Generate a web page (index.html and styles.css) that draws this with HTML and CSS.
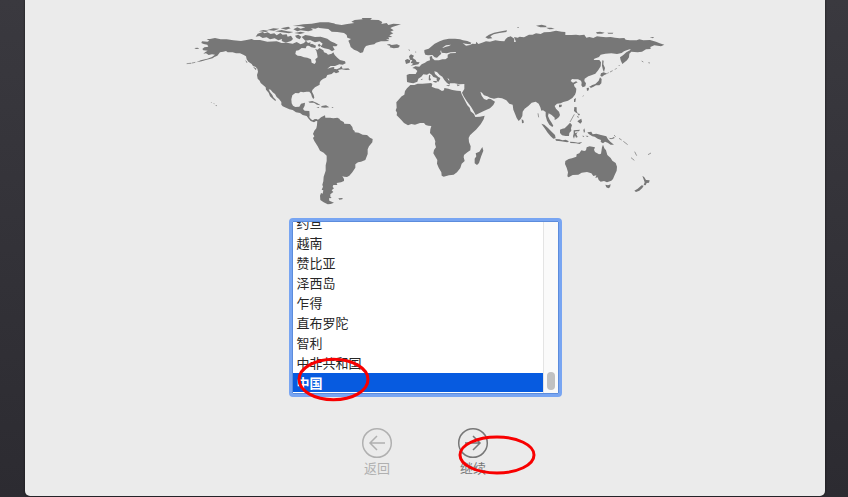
FILE: index.html
```html
<!DOCTYPE html>
<html lang="zh-CN">
<head>
<meta charset="utf-8">
<title>欢迎</title>
<link rel="stylesheet" href="styles.css">
</head>
<body>
<main class="panel">
  <svg class="map" viewBox="0 0 1470 600" aria-hidden="true">
    <!-- North and Central America -->
    <path d="M66 94L82 95 88 92 80 87 90 87 105 84 122 88 140 88 160 91 183 93 200 90 215 87 222 90 240 90 262 95 290 94 305 99 320 98 338 101 350 96 362 103 372 99 378 92 384 99 392 97 390 106 380 108 377 115 365 114 356 121 348 122 346 132 353 137 362 138 372 142 382 143 393 148 395 158 404 162 408 156 406 148 413 142 411 130 409 122 405 117 413 119 418 114 430 121 432 127 440 130 444 134 455 131 460 127 464 135 472 143 480 150 495 154 497 160 488 164 478 163 465 168 452 168 442 176 456 172 463 171 462 176 470 178 479 174 484 168 488 176 505 175 510 179 498 180 485 178 474 180 478 186 468 190 462 186 455 192 442 195 438 203 430 206 422 212 419 218 419 224 405 232 397 240 396 245 401 255 403 263 400 267 396 261 393 251 388 245 380 245 370 247 362 245 356 250 346 249 337 256 334 268 335 280 339 287 346 291 358 290 363 281 375 278 374 287 369 297 374 302 388 303 389 316 388 322 393 328 398 331 405 327 411 328 416 334 408 333 402 337 392 333 386 326 380 318 368 315 360 309 348 307 338 300 328 298 318 293 308 289 304 284 304 276 297 267 290 261 285 252 278 247 272 239 266 238 270 246 277 255 280 262 288 270 286 273 278 266 270 259 266 248 258 239 257 232 250 226 242 219 239 212 233 206 231 195 234 185 232 176 226 170 219 168 215 162 205 155 200 148 198 139 190 134 180 130 168 130 158 127 143 127 138 123 130 125 120 127 112 137 103 141 98 145 80 149 65 154 49 157 62 151 82 146 96 141 105 134 96 133 86 135 78 130 70 131 76 126 83 122 70 121 67 117 73 112 85 110 82 104 71 102 64 99Z"/>
    <!-- Arctic islands -->
    <path d="M227 80L233 71 248 66 254 70 263 67 272 72 283 70 290 76 301 69 308 74 320 73 323 80 333 77 339 87 333 93 317 98 305 93 306 87 295 91 284 85 270 88 260 82 248 84 238 78ZM236 64L250 60 266 62 258 66ZM262 60L280 55 298 56 282 62ZM285 64L305 60 322 64 340 66 327 70 305 67ZM302 55L325 50 332 55 318 59ZM343 69L362 65 375 68 360 72ZM340 58L352 52 362 56 376 52 362 49 338 48 370 43 395 41 420 37 446 37 466 41 450 45 439 49 418 52 406 56 393 55 399 60 385 64 362 61 352 64ZM345 77L355 74 364 80 359 88 350 84ZM365 81L376 75 390 77 405 81 422 80 442 86 452 94 464 99 473 104 469 109 458 109 464 119 456 124 447 118 433 115 422 110 428 101 419 94 405 97 390 90 376 92ZM383 105L396 101 408 107 406 114 394 112ZM413 105L418 101 423 107 417 110ZM43 114L53 113 58 116 48 117ZM22 160L34 158 34 161ZM195 150L202 156 201 160ZM219 170L230 176 227 180ZM92 277L94 276 96 279ZM99 280L104 281 103 283ZM106 285L111 286 109 289ZM385 275L397 273 411 279 422 286 411 284 402 278 389 278ZM425 288L438 286 448 292 434 293 423 292ZM409 291L418 291 416 294ZM454 291L460 291 459 294Z"/>
    <path class="chain" d="M20 161L30 160M36 159L46 157"/>
    <!-- Greenland, Iceland and British Isles -->
    <g transform="translate(480 0)">
      <path d="M-70 47L-48 44 -20 41 5 45 22 42 43 39 34 35 44 30 68 28 65 24 96 24 91 29 116 30 127 36 124 42 140 39 145 45 160 41 183 43 159 50 151 54 161 61 151 65 160 70 148 76 157 81 145 82 148 88 138 88 148 93 134 94 123 94 108 98 103 103 89 105 78 108 73 115 69 127 61 129 52 123 42 119 32 111 29 101 25 92 33 87 22 83 20 75 12 69 -8 66 -25 65 -35 57 -62 54ZM140 104L148 102 155 105 171 103 180 107 175 113 161 115 149 112 151 108ZM207 139L213 133 222 137 218 144 227 150 230 156 239 157 235 163 224 165 212 167 220 161 212 158 217 151 210 149ZM195 151L202 147 211 151 209 158 198 162ZM205 118L210 120 208 123ZM226 124L229 126 227 129Z"/>
      <!-- Mediterranean islands -->
      <path d="M267 196L271 195 270 204 273 208 270 212 266 209ZM279 213L291 213 289 218 281 216ZM318 225L331 226 325 229ZM350 223L360 225 353 229ZM242 208L248 206 246 210Z"/>
      <!-- Novaya Zemlya -->
      <path d="M436 82L447 74 462 68 484 64 501 61 499 66 478 69 461 73 451 79 457 85 444 86Z"/>
    </g>
    <!-- Eurasia -->
    <path d="M680 195L688 192 707 192 712 183 705 176 697 174 706 169 718 170 725 163 735 158 741 154 750 151 749 140 756 138 757 145 764 151 777 151 787 148 796 148 803 143 803 134 811 130 827 129 828 126 812 127 800 130 785 128 783 121 786 115 798 110 807 108 813 104 798 106 789 112 783 120 781 125 784 131 777 137 771 143 764 142 757 135 744 136 736 134 733 127 733 120 746 116 755 109 764 101 779 94 791 89 807 86 825 86 840 88 849 91 862 93 874 98 871 103 856 101 848 99 858 107 870 105 877 101 887 102 889 95 895 102 906 98 918 94 930 95 946 91 960 93 973 94 977 87 983 82 992 79 1003 86 1002 96 1008 95 1002 81 1013 83 1019 80 1032 82 1047 74 1058 74 1068 70 1082 72 1092 67 1110 66 1128 62 1145 65 1156 66 1156 75 1175 75 1188 74 1199 76 1213 74 1219 83 1228 81 1240 84 1251 79 1262 80 1278 82 1292 81 1305 83 1319 85 1333 84 1337 89 1350 91 1370 91 1378 88 1390 91 1410 90 1428 95 1439 100 1453 104 1443 109 1433 107 1423 106 1411 111 1412 117 1398 118 1386 125 1373 127 1354 125 1348 131 1347 142 1341 151 1327 162 1322 151 1320 142 1329 136 1339 127 1350 121 1352 117 1342 120 1332 124 1325 129 1311 132 1294 130 1276 131 1262 134 1257 141 1243 146 1241 150 1258 150 1263 157 1262 169 1255 180 1246 191 1234 196 1225 199 1214 206 1213 213 1218 220 1216 229 1208 232 1204 226 1205 218 1203 212 1194 208 1183 208 1176 207 1172 213 1179 218 1188 214 1193 217 1182 223 1183 229 1189 236 1188 246 1185 254 1177 264 1164 272 1150 276 1142 280 1131 281 1124 288 1128 296 1137 305 1140 315 1137 321 1130 327 1124 330 1124 323 1115 315 1106 310 1104 318 1109 329 1115 338 1120 347 1117 351 1108 344 1101 332 1097 318 1097 306 1089 301 1084 302 1081 292 1076 281 1067 275 1055 278 1045 288 1034 296 1028 305 1027 318 1022 327 1016 333 1010 324 1005 311 1000 299 998 284 988 281 979 271 966 265 954 263 942 266 930 263 922 259 912 256 906 248 901 245 905 257 912 267 920 270 926 266 932 267 945 275 940 285 930 295 913 302 899 309 887 315 881 304 873 290 860 273 851 259 846 248 853 237 853 222 838 223 824 220 809 219 807 207 802 205 810 217 809 224 801 219 793 210 787 200 779 195 771 186 763 184 765 192 775 201 781 204 779 209 774 217 770 211 770 204 760 201 755 194 748 190 741 194 730 193 724 200 715 206 712 215 700 220 690 218 681 216Z"/>
    <g transform="translate(960 0)">
      <!-- Siberian islands -->
      <path d="M108 47L125 44 140 48 137 52 121 52ZM138 53L154 53 164 57 148 58ZM288 67L300 65 314 68 306 71 291 71ZM322 68L340 68 338 71 325 71ZM449 82L462 81 459 85ZM50 52L57 51 55 54Z"/>
      <!-- Sakhalin, Japan and Taiwan -->
      <path d="M307 151L311 152 310 163 315 174 312 186 309 180 306 167ZM303 190L311 187 322 191 313 195 306 200 301 197ZM300 202L305 207 304 220 298 226 288 226 278 232 267 231 277 225 286 222 296 212ZM260 234L267 233 266 241 261 243ZM269 231L277 231 273 235ZM222 268L228 264 226 276 222 276ZM177 284L186 284 184 291 177 292Z"/>
      <path class="chain" d="M322 190L326 188M330 186L338 182M345 179L350 174M356 168L359 165M248 259L251 257M425 153L430 156M445 158L450 159"/>
    </g>
    <!-- Africa and Madagascar -->
    <path transform="translate(630 195)" d="M61 30L73 30 83 26 98 26 123 24 127 27 125 35 136 40 145 41 156 48 162 46 163 39 175 41 187 45 201 47 212 48 215 58 225 77 232 91 239 98 242 109 252 117 256 126 270 125 284 122 281 133 272 148 258 164 247 174 240 181 236 189 237 201 242 214 241 226 232 232 222 240 221 247 224 258 215 266 211 279 201 292 191 299 177 301 161 305 155 302 154 292 146 278 141 266 142 255 137 247 130 235 132 225 138 217 135 207 136 199 132 188 126 181 120 174 121 163 124 153 115 152 107 150 102 144 90 144 75 149 64 147 54 151 42 144 34 135 26 127 20 121 21 113 17 106 20 98 19 82 27 73 35 64 43 59 45 48 51 40ZM277 216L280 227 273 245 267 264 261 270 254 265 254 251 259 244 257 235 268 230Z"/>
    <!-- South America -->
    <path transform="translate(330 285)" d="M82 46L90 40 93 37 105 31 106 38 120 38 130 40 142 38 148 41 151 46 161 51 163 56 180 57 187 66 189 74 194 78 194 82 206 83 218 89 231 90 240 98 248 102 247 112 237 124 233 133 233 147 226 165 213 170 204 172 196 178 196 188 187 202 178 212 171 216 162 215 157 213 162 222 162 228 153 232 140 234 142 240 130 240 128 246 132 250 125 256 130 261 121 268 121 275 125 279 117 280 118 287 132 293 122 297 113 298 101 292 91 285 90 272 93 264 98 266 100 256 95 254 99 245 97 239 100 229 101 215 107 197 107 181 110 168 110 152 101 143 90 137 83 124 73 108 69 99 73 94 69 87 73 77 79 70 81 60ZM145 280L158 279 157 283 148 284ZM71 45L79 43 84 45 78 48Z"/>
    <g transform="translate(960 225)">
      <!-- Australia, Tasmania and New Zealand -->
      <path d="M196 228L206 222 216 220 229 215 230 208 238 205 244 196 253 198 258 196 260 187 269 184 285 187 282 194 285 201 297 208 303 206 306 187 309 179 313 190 318 196 322 210 332 219 337 227 347 234 351 245 350 257 344 270 339 282 334 287 321 292 312 288 302 290 296 285 293 277 286 279 289 271 280 273 274 265 261 261 245 263 235 269 218 270 206 277 202 274 204 262 200 248 195 237ZM316 299L324 301 332 298 330 307 325 310 319 307ZM427 272L433 277 438 285 449 286 447 293 440 294 437 301 431 300 434 292ZM425 301L431 302 427 309 418 317 408 321 403 317 413 311Z"/>
      <!-- Indonesia, Malaysia and New Guinea -->
      <path d="M124 116L133 119 144 129 155 140 165 150 167 160 160 161 152 154 143 143 135 131ZM166 162L178 163 188 166 197 164 207 169 202 172 183 169 168 167ZM210 170L222 171 234 173 247 171 239 177 228 175 211 174ZM180 134L187 131 194 130 204 120 210 113 216 120 213 130 214 137 208 144 207 153 197 153 186 151 180 144ZM221 136L240 134 237 139 226 139 225 145 233 142 229 148 233 156 228 158 225 151 222 161 219 154 221 146ZM262 142L274 140 278 148 289 146 303 150 319 154 324 163 331 170 342 179 332 179 323 173 315 170 309 175 302 171 303 165 293 161 284 155 277 154 266 147ZM250 135L253 130 255 139 252 144ZM246 152L253 153 251 156ZM256 152L266 153 262 156ZM325 158L335 160 343 155 343 160 333 163Z"/>
      <!-- Philippines and Sri Lanka -->
      <path d="M223 66L230 67 230 78 233 85 228 83 222 78ZM231 85L240 87 237 92ZM230 92L236 95 235 100ZM237 105L244 101 246 110 241 116 232 109ZM65 102L71 107 71 114 66 115Z"/>
      <path class="chain" d="M223 88L210 111M342 150L347 155M357 160L365 165M370 169L383 179M393 218L403 226M404 200L410 212M444 209L453 204M114 85L116 97"/>
    </g>
  </svg>

  <div class="countries">
    <select class="list" size="9" aria-label="国家或地区">
      <option>约旦</option>
      <option>越南</option>
      <option>赞比亚</option>
      <option>泽西岛</option>
      <option>乍得</option>
      <option>直布罗陀</option>
      <option>智利</option>
      <option>中非共和国</option>
      <option selected>中国</option>
    </select>
    <div class="track"><div class="thumb"></div></div>
    <svg class="mark mark-country" viewBox="0 0 74 46" aria-hidden="true"><ellipse cx="37" cy="23" rx="34" ry="20"/></svg>
  </div>

  <nav class="actions">
    <button class="action" type="button" disabled>
      <svg class="arrow" viewBox="0 0 32 32" aria-hidden="true"><circle cx="16" cy="16" r="14.3"/><path d="M24 16H9M16 9L9 16L16 23"/></svg>
      <span>返回</span>
    </button>
    <button class="action" type="button">
      <svg class="arrow" viewBox="0 0 32 32" aria-hidden="true"><circle cx="16" cy="16" r="14.3"/><path d="M8 16H23M16 9L23 16L16 23"/></svg>
      <span>继续</span>
      <svg class="mark mark-next" viewBox="0 0 80 42" aria-hidden="true"><ellipse cx="40" cy="21" rx="37" ry="18"/></svg>
    </button>
  </nav>
</main>
<script src="list.js"></script>
</body>
</html>
```
FILE: styles.css
```css
* {
  box-sizing: border-box;
}

body {
  margin: 0;
  min-height: 100vh;
  padding: 0 23px 1px 25px;
  background: linear-gradient(#3a393f, #2c2b31);
  font-family: "Noto Sans CJK SC", sans-serif;
  font-size: 13px;
  line-height: 18px;
}

.panel {
  display: flex;
  flex-direction: column;
  align-items: center;
  min-height: calc(100vh - 1px);
  padding: 10px 0 16px;
  border-radius: 0 0 5px 5px;
  background: #ebebeb;
  box-shadow: 0 0 2px #111;
}

.map {
  display: block;
  width: 490px;
  max-width: 100%;
  fill: #777;
}

.chain {
  fill: none;
  stroke: #999;
  stroke-width: 3;
}

.countries {
  position: relative;
  display: flex;
  width: 273px;
  height: 179px;
  margin-top: 8px;
  border: 3px solid #78a5f2;
  border-radius: 4px;
  background: #fff;
  box-shadow: inset 0 0 0 1px #5c8cdc;
  padding: 1px;
}

.list {
  flex: 1;
  min-width: 0;
  height: 171px;
  margin: 0;
  padding: 0;
  border: 0;
  border-radius: 0;
  outline: 0;
  overflow: hidden;
  background: #fff;
  color: #262626;
  font: inherit;
}

.list option {
  height: 20px;
  min-height: 20px;
  padding: 0 4px 2px;
  line-height: 18px;
}

.list option:checked {
  background: linear-gradient(#075be0 19px, #fff 19px);
  color: #fff;
  font-weight: 700;
}

.track {
  display: flex;
  align-items: flex-end;
  justify-content: center;
  width: 15px;
  padding-bottom: 3px;
  border-left: 1px solid #e4e4e4;
  background: #fafafa;
}

.thumb {
  width: 8px;
  height: 18px;
  border-radius: 4px;
  background: #c1c1c1;
}

.actions {
  display: flex;
  gap: 56px;
  margin-top: 30px;
}

.action {
  position: relative;
  display: flex;
  flex-direction: column;
  align-items: center;
  width: 40px;
  padding: 0;
  border: 0;
  background: none;
  color: #777;
  font: inherit;
}

.action:disabled {
  color: #b0b0b0;
}

.arrow {
  width: 32px;
  height: 32px;
  fill: none;
  stroke: currentColor;
  stroke-width: 1.5;
}

.mark {
  position: absolute;
  fill: none;
  stroke: #f80000;
  stroke-width: 3;
  pointer-events: none;
}

.mark-country {
  left: 4px;
  top: 135px;
  width: 75px;
  height: 47px;
}

.mark-next {
  left: 4px;
  top: 7px;
  width: 80px;
  height: 42px;
}
```
FILE: list.js
```js
const list = document.querySelector(".list");
list.scrollTop = list.scrollHeight;
```
